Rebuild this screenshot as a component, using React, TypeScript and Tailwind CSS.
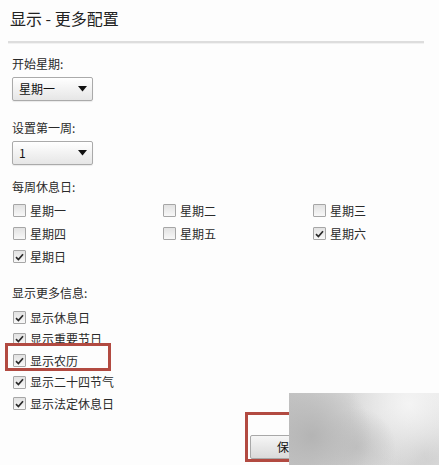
import React from 'react';

const font = { fontFamily: '"Noto Sans CJK SC", "Noto Sans", sans-serif' };

const CheckBox: React.FC<{ checked?: boolean }> = ({ checked }) => (
  <span className="flex h-[13px] w-[13px] shrink-0 items-center justify-center rounded-[1px] border border-[#a6a6a6] bg-gradient-to-b from-[#e2e2e2] to-[#f8f8f8]">
    {checked && (
      <svg width="9" height="8" viewBox="0 0 9 8">
        <path d="M1 4.2 L3.4 6.5 L8 1.2" fill="none" stroke="#2a2a2a" strokeWidth="1.7" />
      </svg>
    )}
  </span>
);

const CheckRow: React.FC<{ label: string; checked?: boolean; className?: string }> = ({ label, checked, className }) => (
  <div className={`flex items-center gap-[4px] ${className ?? ''}`}>
    <CheckBox checked={checked} />
    <span className="text-[12px] leading-[16px] text-[#2a2a2a]">{label}</span>
  </div>
);

const Select: React.FC<{ value: string }> = ({ value }) => (
  <div className="mt-[5px] flex h-[24px] w-[81px] items-center justify-between rounded-[2px] border border-[#aaaaaa] bg-gradient-to-b from-[#ffffff] to-[#e6e6e6] pl-[6px] pr-[5px] shadow-[0_1px_1px_rgba(0,0,0,0.08)]">
    <span className="text-[12px] leading-[16px] text-[#111]">{value}</span>
    <svg width="9" height="6" viewBox="0 0 9 6">
      <path d="M0 0 H9 L4.5 5.5 Z" fill="#111" />
    </svg>
  </div>
);

const weekdays = [
  { label: '星期一', checked: false },
  { label: '星期二', checked: false },
  { label: '星期三', checked: false },
  { label: '星期四', checked: false },
  { label: '星期五', checked: false },
  { label: '星期六', checked: true },
  { label: '星期日', checked: true },
];

const moreInfo = ['显示休息日', '显示重要节日', '显示农历', '显示二十四节气', '显示法定休息日'];

export default function App() {
  return (
    <div className="relative h-[465px] w-[439px] overflow-hidden bg-[#fdfdfd]" style={font}>
      <div className="pl-[10px] pt-[8px] text-[16px] leading-[20px] text-[#222]">显示 - 更多配置</div>
      <div className="ml-[8px] mt-[13px] h-[3px] w-[416px] border-t-2 border-b border-t-[#dddddd] border-b-[#f1f1f1]" />

      <div className="pl-[12px]">
        <div className="mt-[12px] text-[12px] leading-[16px] text-[#2a2a2a]">开始星期:</div>
        <Select value="星期一" />

        <div className="mt-[19px] text-[12px] leading-[16px] text-[#2a2a2a]">设置第一周:</div>
        <Select value="1" />

        <div className="mt-[14px] text-[12px] leading-[16px] text-[#2a2a2a]">每周休息日:</div>
        <div className="mt-[4px] grid grid-cols-[150px_150px_120px] pl-[1px]">
          {weekdays.map((d) => (
            <CheckRow key={d.label} label={d.label} checked={d.checked} className="h-[23px]" />
          ))}
        </div>

        <div className="mt-[17px] text-[12px] leading-[16px] text-[#2a2a2a]">显示更多信息:</div>
        <div className="mt-[6px] flex flex-col pl-[1px]">
          {moreInfo.map((t) => (
            <CheckRow key={t} label={t} checked className="h-[21.5px]" />
          ))}
        </div>

        <div className="mt-[18px] pl-[238px]">
          <button className="h-[24px] w-[78px] rounded-[2px] border border-[#a8a8a8] bg-gradient-to-b from-[#f6f6f6] to-[#dadada] text-[12px] text-[#111]">
            保存
          </button>
        </div>
      </div>

      {/* annotation boxes drawn over the screenshot */}
      <div className="absolute left-[5px] top-[343px] h-[28px] w-[106px] border-[3px] border-[#b24a41]" />
      <div className="absolute left-[245px] top-[412px] h-[50px] w-[70px] border-[3px] border-[#b24a41]" />

      {/* blurred patch */}
      <div className="absolute left-[289px] top-[393px] h-[72px] w-[150px] bg-[radial-gradient(circle_at_15%_60%,#b4b4b4_0,transparent_45%),radial-gradient(circle_at_45%_75%,#c2c2c2_0,transparent_40%),radial-gradient(circle_at_80%_15%,#f4f4f4_0,transparent_45%),radial-gradient(circle_at_90%_85%,#cfcfcf_0,transparent_40%),linear-gradient(to_right,#c6c6c6,#dadada,#e8e8e8)]" />
    </div>
  );
}
